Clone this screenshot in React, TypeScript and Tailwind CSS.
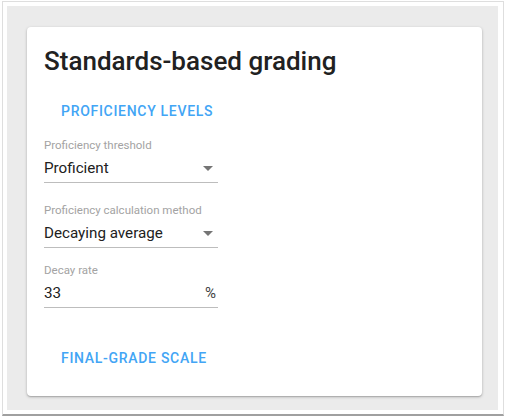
const fields = [
    { label: 'Proficiency threshold', value: 'Proficient', kind: 'select' },
    { label: 'Proficiency calculation method', value: 'Decaying average', kind: 'select' },
    { label: 'Decay rate', value: '33', kind: 'percent' },
];

function Caret() {
    return (
        <svg width="10" height="5" viewBox="0 0 10 5" className="mr-[5px]">
            <path d="M0 0 L10 0 L5 5 Z" fill="#757575" />
        </svg>
    );
}

export default function App() {
    return (
        <div className="w-[505px] h-[418px] bg-white pl-[2px] pt-[1px] font-['Roboto',sans-serif]">
            <div className="w-[502px] h-[415px] border-x border-t border-[#dedede] border-b-2 border-b-[#a0a0a0] p-[4px]">
                <div className="w-[491px] h-[404px] bg-[#ebebeb] pl-[20px] pt-[21px]">
                    {/* Card */}
                    <div className="w-[455px] h-[369px] bg-white rounded-[4px] shadow-[0_1px_3px_rgba(0,0,0,0.25),0_1px_1px_rgba(0,0,0,0.12)] pl-[17px] pt-[18px]">
                        <h1 className="text-[26px] leading-[32px] font-medium text-[#212121]">Standards-based grading</h1>

                        <button className="mt-[16px] h-9 px-[17px] text-[14px] font-medium tracking-[0.7px] text-[#42a5f5] uppercase">
                            Proficiency levels
                        </button>

                        <div className="w-[174px]">
                            {fields.map((f, i) => (
                                <div key={f.label} className={i === 0 ? 'mt-[8px]' : i === 1 ? 'mt-[19px]' : 'mt-[14px]'}>
                                    <div className="text-[11.5px] leading-[16px] text-[#a3a3a3]">{f.label}</div>
                                    <div className="mt-[3px] flex items-center justify-between border-b border-[#bdbdbd] pb-[2px]">
                                        <span className="text-[15.2px] leading-[24px] text-[#212121]">{f.value}</span>
                                        {f.kind === 'select' ? (
                                            <Caret />
                                        ) : (
                                            <span className="text-[15px] leading-[24px] text-[#424242] mr-[2px]">%</span>
                                        )}
                                    </div>
                                </div>
                            ))}
                        </div>

                        <button className="mt-[32px] h-9 px-[17px] text-[14px] font-medium tracking-[0.7px] text-[#42a5f5] uppercase">
                            Final-grade scale
                        </button>
                    </div>
                </div>
            </div>
        </div>
    );
}
